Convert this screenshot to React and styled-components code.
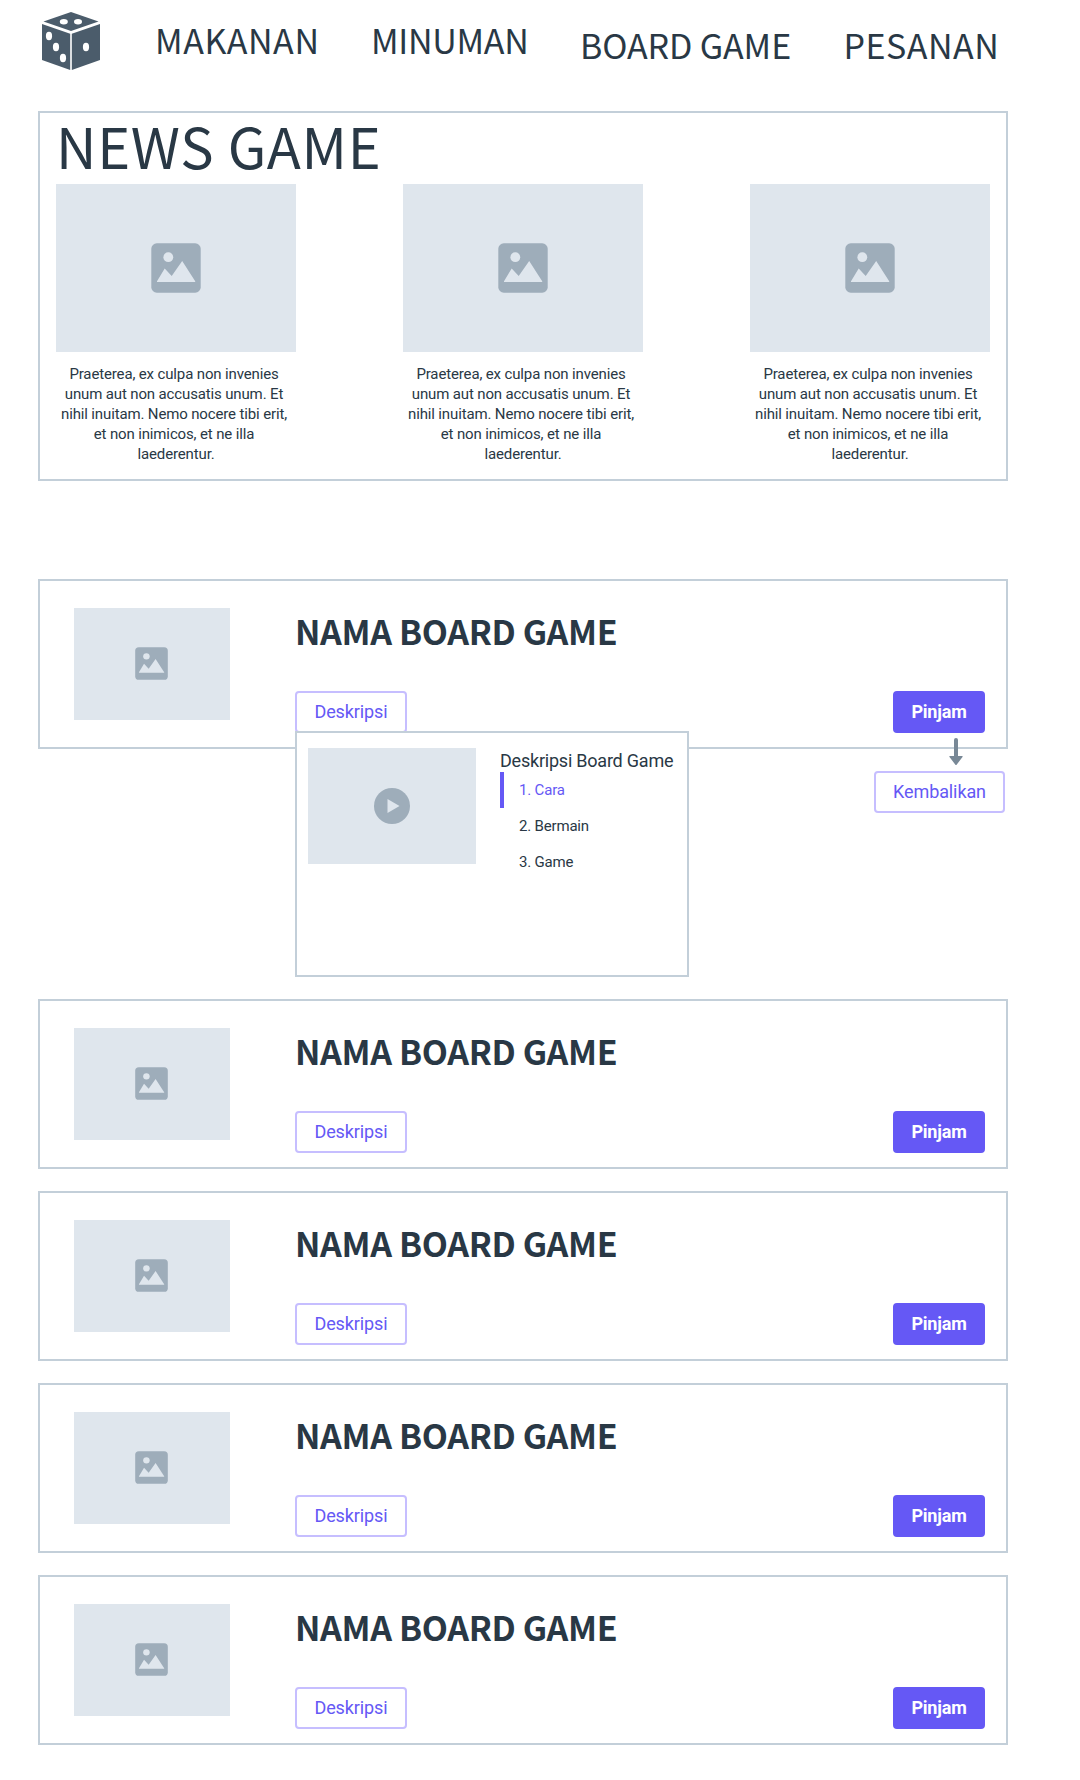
import React from "react";
import styled, { createGlobalStyle } from "styled-components";

const ink = "#293845";
const line = "#c3cfd9";
const fill = "#dfe6ed";
const muted = "#9eadba";
const accent = "#6558f5";
const accentSoft = "#c6beff";
const display = '"Noto Sans CJK SC", Roboto, sans-serif';

const Global = createGlobalStyle`
  *, *::before, *::after { box-sizing: border-box; }
  body {
    margin: 0;
    background: #fff;
    color: ${ink};
    font-family: Roboto, "Liberation Sans", sans-serif;
  }
  h1, h2, h3, p, ol { margin: 0; padding: 0; font-weight: 400; }
  svg { display: block; }
`;

const Page = styled.div`
  width: 1080px;
  height: 1780px;
  padding: 0 72px 0 38px;
  overflow: hidden;
`;

const Header = styled.header`
  display: flex;
  align-items: flex-start;
  height: 111px;
  padding: 11px 0 0 4px;
`;

const Nav = styled.nav`
  display: flex;
  align-items: flex-start;
  padding-top: 11px;
  margin-left: 55px;
`;

const NavLink = styled.a`
  flex: none;
  width: ${(p) => p.$width}px;
  padding-top: ${(p) => (p.$low ? 5 : 0)}px;
  font-family: ${display};
  font-size: 34px;
  line-height: 36px;
  letter-spacing: ${(p) => p.$track}px;
  white-space: nowrap;
`;

const News = styled.section`
  height: 370px;
  padding: 0 16px;
  border: 2px solid ${line};
`;

const NewsTitle = styled.h1`
  height: 71px;
  font-family: ${display};
  font-size: 56px;
  line-height: 63px;
  letter-spacing: 0.7px;
`;

const NewsGrid = styled.div`
  display: grid;
  grid-template-columns: repeat(3, 240px);
  justify-content: space-between;
`;

const Placeholder = styled.div`
  display: flex;
  align-items: center;
  justify-content: center;
  flex: none;
  width: ${(p) => p.$w}px;
  height: ${(p) => p.$h}px;
  padding: ${(p) => (p.$thumb ? "0 1px 1px 0" : 0)};
  background: ${fill};
`;

const NewsText = styled.p`
  padding-top: 12px;
  font-size: 15px;
  line-height: 20px;
  letter-spacing: -0.14px;
  text-align: center;
`;

const TextLine = styled.span`
  display: block;
  padding-right: 4px;
  white-space: nowrap;
  &:last-child { padding-right: 0; }
`;

const GameList = styled.main`
  display: flex;
  flex-direction: column;
  gap: 22px;
  margin-top: 98px;
`;

const GameCard = styled.article`
  position: relative;
  display: flex;
  align-items: flex-start;
  height: 170px;
  padding: 27px 21px 0 34px;
  border: 2px solid ${line};
  margin-bottom: ${(p) => (p.$open ? 228 : 0)}px;
`;

const GameBody = styled.div`
  flex: 1;
  display: flex;
  flex-direction: column;
  padding: 5px 0 0 65px;
`;

const GameTitle = styled.h2`
  height: 78px;
  font-family: ${display};
  font-size: 34px;
  font-weight: 700;
  line-height: 36px;
  letter-spacing: -0.35px;
  white-space: nowrap;
`;

const Actions = styled.div`
  display: flex;
  justify-content: space-between;
`;

const Button = styled.button`
  width: ${(p) => p.$w}px;
  height: 42px;
  padding: 0;
  border: 2px solid ${(p) => (p.$solid ? accent : accentSoft)};
  border-radius: 4px;
  background: ${(p) => (p.$solid ? accent : "#fff")};
  color: ${(p) => (p.$solid ? "#fff" : accent)};
  font-family: inherit;
  font-size: 18px;
  font-weight: ${(p) => (p.$solid ? 700 : 400)};
  line-height: 38px;
  letter-spacing: ${(p) => (p.$solid ? -0.2 : -0.1)}px;
  text-align: center;
`;

const Popup = styled.div`
  position: absolute;
  top: 150px;
  left: 255px;
  z-index: 1;
  display: flex;
  align-items: flex-start;
  width: 394px;
  height: 246px;
  padding: 15px 11px;
  border: 2px solid ${line};
  background: #fff;
`;

const PopupText = styled.div`
  margin-left: 24px;
`;

const PopupTitle = styled.h3`
  height: 24px;
  font-size: 18px;
  line-height: 26px;
  letter-spacing: -0.22px;
  white-space: nowrap;
`;

const Steps = styled.ol`
  list-style: none;
`;

const Step = styled.li`
  height: 36px;
  padding-left: 15px;
  border-left: 4px solid ${(p) => (p.$active ? accent : "transparent")};
  color: ${(p) => (p.$active ? accent : ink)};
  font-size: 15px;
  line-height: 36px;
  letter-spacing: -0.18px;
`;

const ReturnFlow = styled.div`
  position: absolute;
  top: 157px;
  right: 1px;
  display: flex;
  flex-direction: column;
  align-items: flex-end;
`;

const ArrowBox = styled.div`
  height: 33px;
  padding-right: 42px;
`;

function Dice() {
  return (
    <svg width="58" height="60" viewBox="0 0 58 60">
      <g fill="#4b5c6b">
        <path d="M29 1 56.5 10.5 29 20 1.5 10.5Z" />
        <path d="M0 13 28.2 22.8V59L0 49Z" />
        <path d="M58 13 29.8 22.8V59L58 49Z" />
      </g>
      <g fill="#fff">
        <ellipse cx="21.8" cy="10.8" rx="4" ry="2.7" />
        <ellipse cx="36" cy="10.8" rx="4" ry="2.7" />
        <ellipse cx="7" cy="25" rx="3.1" ry="4.2" />
        <ellipse cx="14" cy="36" rx="3.1" ry="4.2" />
        <ellipse cx="21" cy="47" rx="3.1" ry="4.2" />
        <ellipse cx="44" cy="36" rx="3.1" ry="4.2" />
      </g>
    </svg>
  );
}

function ImageIcon({ size }) {
  return (
    <svg width={size} height={size} viewBox="0 0 50 50">
      <rect x="0.3" y="0.3" width="49.4" height="49.4" rx="5.5" fill={muted} />
      <circle cx="17.3" cy="14.2" r="4.9" fill={fill} />
      <path d="M6 38.2 13.7 25.5 20.7 33 31.2 18 44.2 38.2V39H6Z" fill={fill} />
    </svg>
  );
}

function PlayIcon() {
  return (
    <svg width="36" height="36" viewBox="0 0 36 36">
      <circle cx="18" cy="18" r="18" fill={muted} />
      <path d="M13.5 11V25L25.5 18Z" fill={fill} />
    </svg>
  );
}

function Arrow() {
  return (
    <svg width="14" height="28" viewBox="0 0 14 28">
      <path
        d="M5 2Q5 0 7 0T9 2V18H13.2Q14 18.2 13.5 19L7.8 26.5Q7 27.5 6.2 26.5L.5 19Q0 18.2.8 18H5Z"
        fill="#788896"
      />
    </svg>
  );
}

const newsLines = [
  "Praeterea, ex culpa non invenies",
  "unum aut non accusatis unum. Et",
  "nihil inuitam. Nemo nocere tibi erit,",
  "et non inimicos, et ne illa",
  "laederentur.",
];

function Game({ open }) {
  return (
    <GameCard $open={open}>
      <Placeholder $w={156} $h={112} $thumb>
        <ImageIcon size={33} />
      </Placeholder>
      <GameBody>
        <GameTitle>NAMA BOARD GAME</GameTitle>
        <Actions>
          <Button $w={112}>Deskripsi</Button>
          <Button $w={92} $solid>Pinjam</Button>
        </Actions>
      </GameBody>
      {open && (
        <>
          <Popup>
            <Placeholder $w={168} $h={116}>
              <PlayIcon />
            </Placeholder>
            <PopupText>
              <PopupTitle>Deskripsi Board Game</PopupTitle>
              <Steps>
                <Step $active>1. Cara</Step>
                <Step>2. Bermain</Step>
                <Step>3. Game</Step>
              </Steps>
            </PopupText>
          </Popup>
          <ReturnFlow>
            <ArrowBox>
              <Arrow />
            </ArrowBox>
            <Button $w={131}>Kembalikan</Button>
          </ReturnFlow>
        </>
      )}
    </GameCard>
  );
}

export default function App() {
  return (
    <>
      <Global />
      <Page>
        <Header>
          <Dice />
          <Nav>
            <NavLink $width={216} $track={0.6}>MAKANAN</NavLink>
            <NavLink $width={209} $track={-0.3}>MINUMAN</NavLink>
            <NavLink $width={263.5} $track={-0.1} $low>BOARD GAME</NavLink>
            <NavLink $width={160} $track={0.5} $low>PESANAN</NavLink>
          </Nav>
        </Header>
        <News>
          <NewsTitle>NEWS GAME</NewsTitle>
          <NewsGrid>
            {[0, 1, 2].map((i) => (
              <article key={i}>
                <Placeholder $w={240} $h={168}>
                  <ImageIcon size={50} />
                </Placeholder>
                <NewsText>
                  {newsLines.map((text) => (
                    <TextLine key={text}>{text}</TextLine>
                  ))}
                </NewsText>
              </article>
            ))}
          </NewsGrid>
        </News>
        <GameList>
          {[0, 1, 2, 3, 4].map((i) => (
            <Game key={i} open={i === 0} />
          ))}
        </GameList>
      </Page>
    </>
  );
}
